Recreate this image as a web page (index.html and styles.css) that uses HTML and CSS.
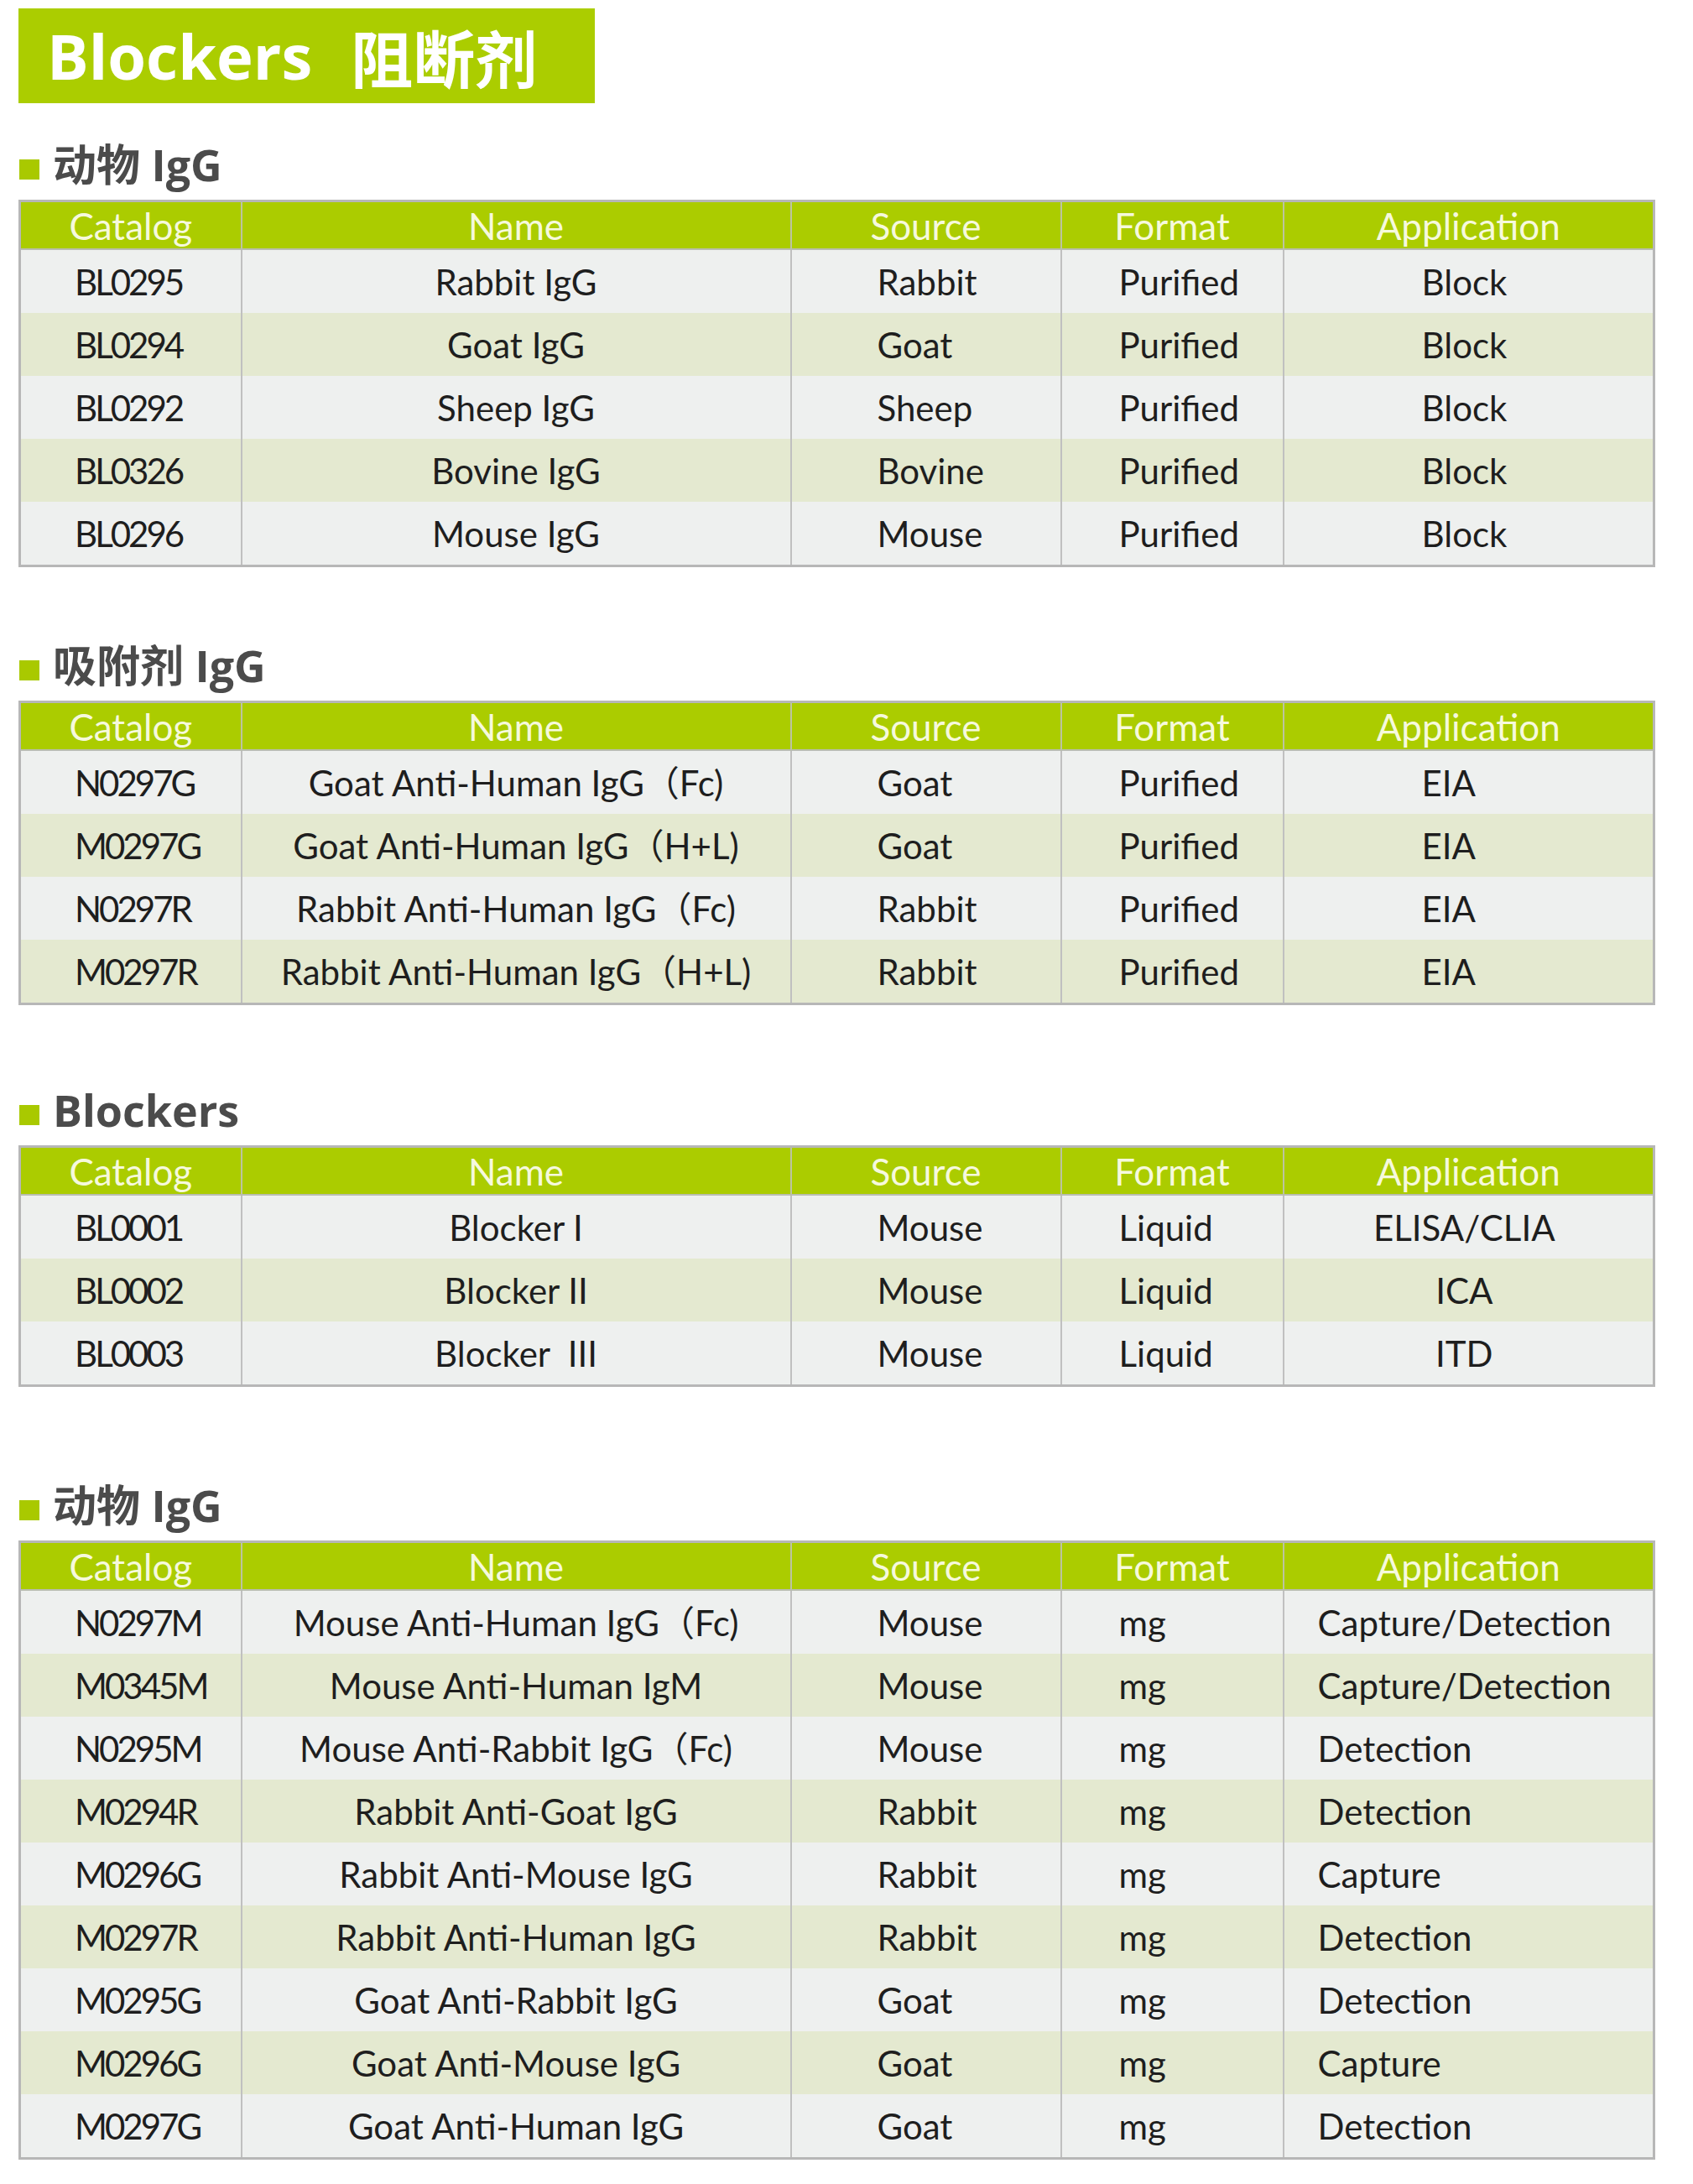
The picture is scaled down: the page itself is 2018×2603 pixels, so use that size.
FILE: index.html
```html
<!DOCTYPE html>
<html lang="zh">
<head>
<meta charset="utf-8">
<title>Blockers 阻断剂</title>
<link rel="stylesheet" href="styles.css">
</head>
<body>
<div class="page">
  <div class="banner"><span class="banner-en">Blockers</span><span class="banner-zh">阻断剂</span></div>

  <section class="sec sec-1">
    <h2 class="heading"><span class="sq"></span><span class="heading-text">动物 IgG</span></h2>
    <table class="tbl app-left">
      <colgroup><col class="c1"><col class="c2"><col class="c3"><col class="c4"><col class="c5"></colgroup>
      <thead><tr><th>Catalog</th><th>Name</th><th>Source</th><th>Format</th><th>Application</th></tr></thead>
      <tbody>
        <tr><td>BL0295</td><td>Rabbit IgG</td><td>Rabbit</td><td>Purified</td><td>Block</td></tr>
        <tr><td>BL0294</td><td>Goat IgG</td><td>Goat</td><td>Purified</td><td>Block</td></tr>
        <tr><td>BL0292</td><td>Sheep IgG</td><td>Sheep</td><td>Purified</td><td>Block</td></tr>
        <tr><td>BL0326</td><td>Bovine IgG</td><td>Bovine</td><td>Purified</td><td>Block</td></tr>
        <tr><td>BL0296</td><td>Mouse IgG</td><td>Mouse</td><td>Purified</td><td>Block</td></tr>
      </tbody>
    </table>
  </section>

  <section class="sec sec-2">
    <h2 class="heading"><span class="sq"></span><span class="heading-text">吸附剂 IgG</span></h2>
    <table class="tbl app-left">
      <colgroup><col class="c1"><col class="c2"><col class="c3"><col class="c4"><col class="c5"></colgroup>
      <thead><tr><th>Catalog</th><th>Name</th><th>Source</th><th>Format</th><th>Application</th></tr></thead>
      <tbody>
        <tr><td>N0297G</td><td>Goat Anti-Human IgG（Fc)</td><td>Goat</td><td>Purified</td><td>EIA</td></tr>
        <tr><td>M0297G</td><td>Goat Anti-Human IgG（H+L)</td><td>Goat</td><td>Purified</td><td>EIA</td></tr>
        <tr><td>N0297R</td><td>Rabbit Anti-Human IgG（Fc)</td><td>Rabbit</td><td>Purified</td><td>EIA</td></tr>
        <tr><td>M0297R</td><td>Rabbit Anti-Human IgG（H+L)</td><td>Rabbit</td><td>Purified</td><td>EIA</td></tr>
      </tbody>
    </table>
  </section>

  <section class="sec sec-3">
    <h2 class="heading"><span class="sq"></span><span class="heading-text">Blockers</span></h2>
    <table class="tbl app-center">
      <colgroup><col class="c1"><col class="c2"><col class="c3"><col class="c4"><col class="c5"></colgroup>
      <thead><tr><th>Catalog</th><th>Name</th><th>Source</th><th>Format</th><th>Application</th></tr></thead>
      <tbody>
        <tr><td>BL0001</td><td>Blocker I</td><td>Mouse</td><td>Liquid</td><td>ELISA/CLIA</td></tr>
        <tr><td>BL0002</td><td>Blocker II</td><td>Mouse</td><td>Liquid</td><td>ICA</td></tr>
        <tr><td>BL0003</td><td>Blocker&nbsp; III</td><td>Mouse</td><td>Liquid</td><td>ITD</td></tr>
      </tbody>
    </table>
  </section>

  <section class="sec sec-4">
    <h2 class="heading"><span class="sq"></span><span class="heading-text">动物 IgG</span></h2>
    <table class="tbl app-near">
      <colgroup><col class="c1"><col class="c2"><col class="c3"><col class="c4"><col class="c5"></colgroup>
      <thead><tr><th>Catalog</th><th>Name</th><th>Source</th><th>Format</th><th>Application</th></tr></thead>
      <tbody>
        <tr><td>N0297M</td><td>Mouse Anti-Human IgG（Fc)</td><td>Mouse</td><td>mg</td><td>Capture/Detection</td></tr>
        <tr><td>M0345M</td><td>Mouse Anti-Human IgM</td><td>Mouse</td><td>mg</td><td>Capture/Detection</td></tr>
        <tr><td>N0295M</td><td>Mouse Anti-Rabbit IgG（Fc)</td><td>Mouse</td><td>mg</td><td>Detection</td></tr>
        <tr><td>M0294R</td><td>Rabbit Anti-Goat IgG</td><td>Rabbit</td><td>mg</td><td>Detection</td></tr>
        <tr><td>M0296G</td><td>Rabbit Anti-Mouse IgG</td><td>Rabbit</td><td>mg</td><td>Capture</td></tr>
        <tr><td>M0297R</td><td>Rabbit Anti-Human IgG</td><td>Rabbit</td><td>mg</td><td>Detection</td></tr>
        <tr><td>M0295G</td><td>Goat Anti-Rabbit IgG</td><td>Goat</td><td>mg</td><td>Detection</td></tr>
        <tr><td>M0296G</td><td>Goat Anti-Mouse IgG</td><td>Goat</td><td>mg</td><td>Capture</td></tr>
        <tr><td>M0297G</td><td>Goat Anti-Human IgG</td><td>Goat</td><td>mg</td><td>Detection</td></tr>
      </tbody>
    </table>
  </section>
</div>
</body>
</html>
```

FILE: styles.css
```css
html, body {
  margin: 0;
  padding: 0;
  background: #ffffff;
}

.page {
  padding: 10px 0 30px 22px;
  font-family: "Lato", "Noto Sans CJK SC", sans-serif;
}

.banner {
  width: 687px;
  height: 113px;
  box-sizing: border-box;
  background: #abcd00;
  color: #ffffff;
  display: flex;
  align-items: center;
  padding-left: 34px;
  font-family: "Open Sans", "Noto Sans CJK SC", sans-serif;
  font-weight: 700;
  font-size: 74px;
  line-height: 1;
}

.banner-zh {
  margin-left: 46px;
  font-family: "Noto Sans CJK SC", sans-serif;
  font-size: 74px;
}

.sec-1 { margin-top: 52px; }
.sec-2 { margin-top: 96px; }
.sec-3 { margin-top: 104px; }
.sec-4 { margin-top: 120px; }

.heading {
  margin: 0 0 13px 0;
  height: 50px;
  display: flex;
  align-items: center;
  font-weight: 700;
  font-size: 52px;
  line-height: 1;
  color: #4b4b4b;
  font-family: "Open Sans", "Noto Sans CJK SC", sans-serif;
}

.sq {
  width: 24px;
  height: 24px;
  background: #a9c900;
  margin: 4px 16px 0 1px;
  flex: none;
}

.heading-text {
  display: block;
  margin-top: -8px;
}

.tbl {
  width: 1948px;
  table-layout: fixed;
  border-collapse: collapse;
  border: 3px solid #b7b7b7;
  font-size: 42px;
  color: #1e1e1e;
}

.c1 { width: 264px; }
.c2 { width: 655px; }
.c3 { width: 322px; }
.c4 { width: 265px; }
.c5 { width: 442px; }

.tbl th {
  background: #abcc00;
  color: #f6f9dd;
  font-weight: 400;
  font-size: 44px;
  height: 55px;
  padding: 0;
  text-align: center;
  border-left: 2px solid #bcc4a0;
  border-bottom: 2px solid #b9bdb0;
  line-height: 1;
}

.tbl th:first-child { border-left: none; }

.tbl td {
  height: 75px;
  padding: 0;
  line-height: 1;
  border-left: 2px solid #c0c0c0;
  white-space: nowrap;
}

.tbl td:first-child { border-left: none; }

.tbl tbody tr:nth-child(odd) td { background: #eef0ef; }
.tbl tbody tr:nth-child(even) td { background: #e4e9d0; }

.tbl td:nth-child(1) { text-align: left; padding-left: 64px; letter-spacing: -3px; }
.tbl td:nth-child(2) { text-align: center; }
.tbl td:nth-child(3) { text-align: left; padding-left: 102px; }
.tbl td:nth-child(4) { text-align: left; padding-left: 68px; }

.app-left td:nth-child(5) { text-align: left; padding-left: 164px; }
.app-center td:nth-child(5) { text-align: center; padding-right: 10px; }
.app-near td:nth-child(5) { text-align: left; padding-left: 40px; }
```
